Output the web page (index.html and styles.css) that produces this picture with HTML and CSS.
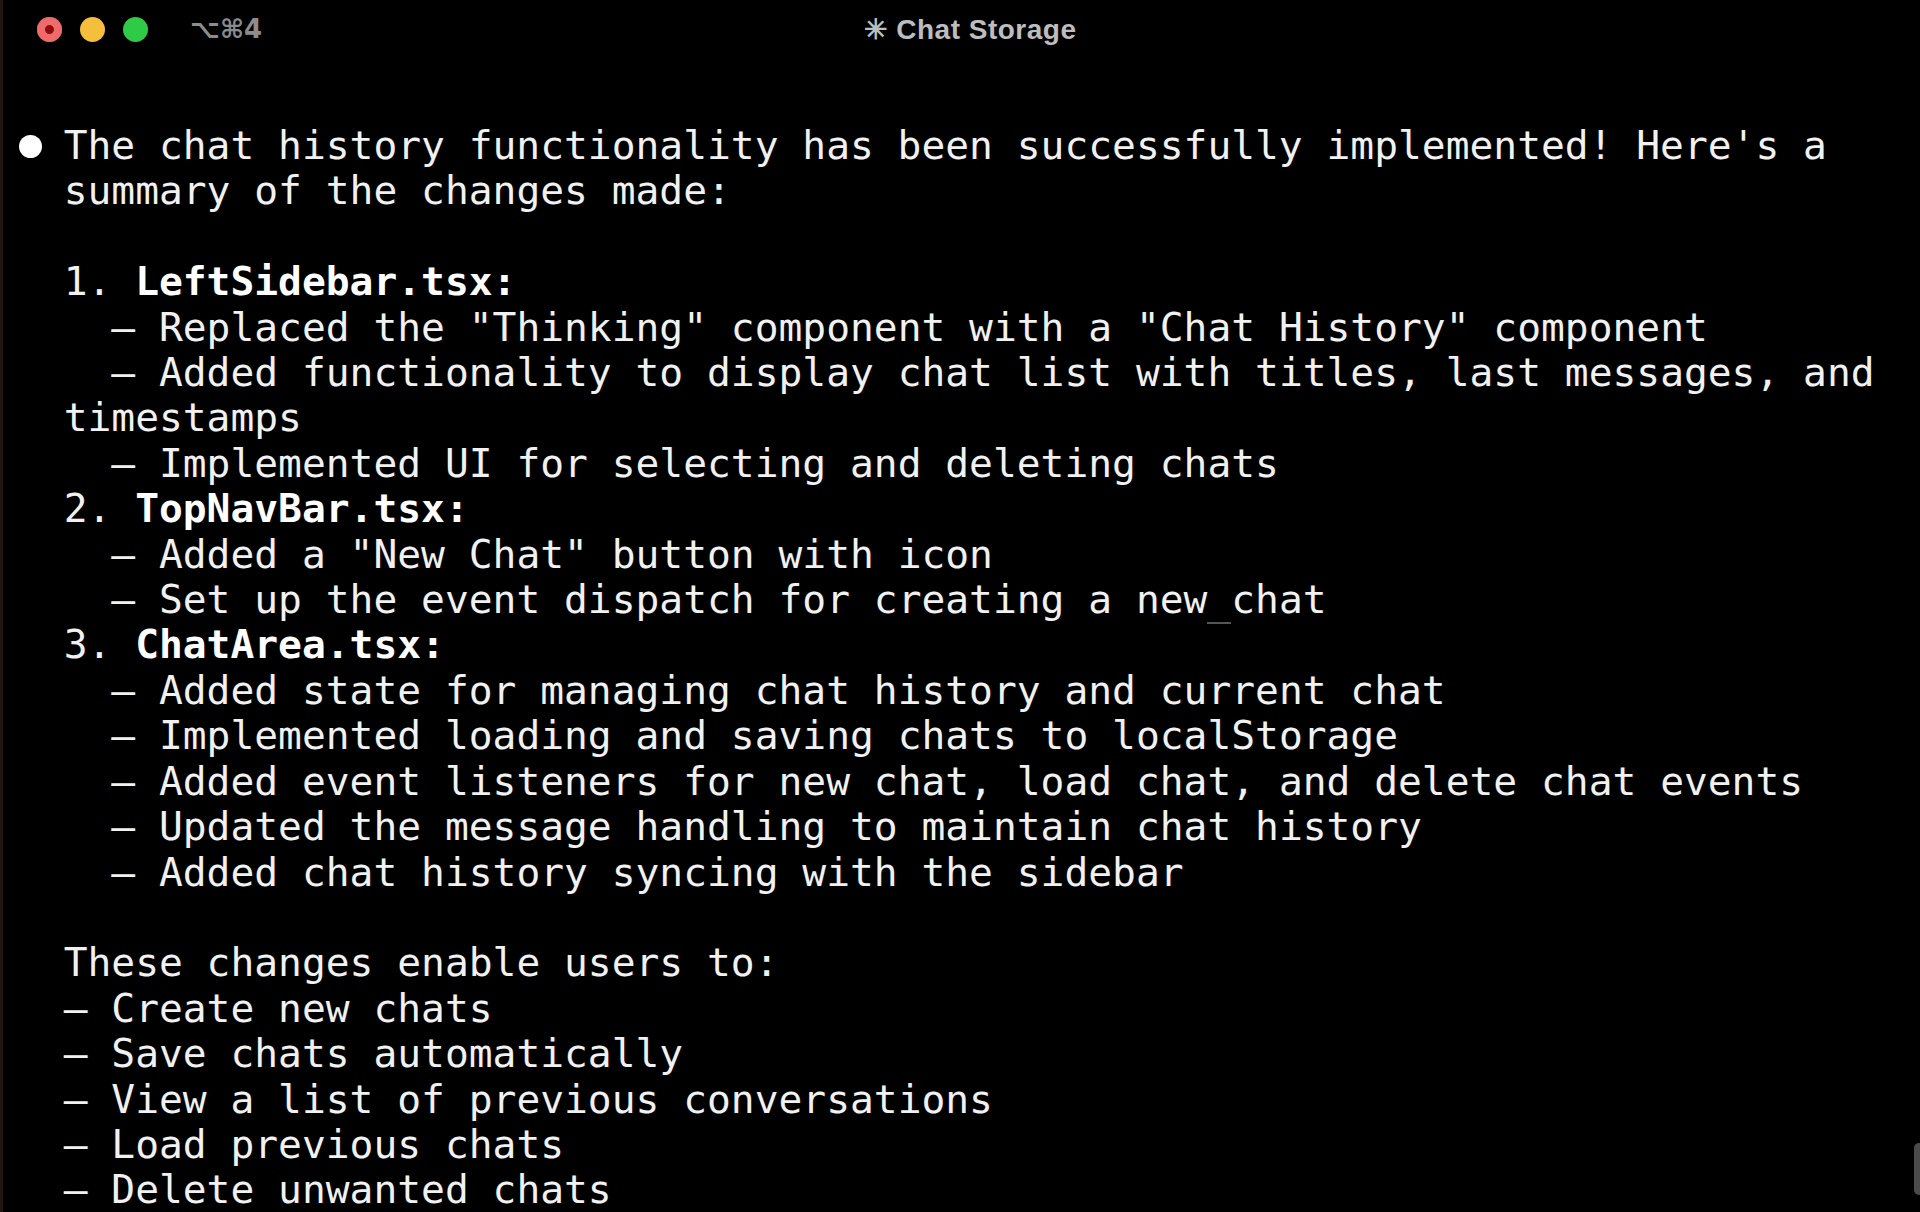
FILE: index.html
```html
<!DOCTYPE html>
<html lang="en">
<head>
  <meta charset="UTF-8">
  <meta name="viewport" content="width=device-width, initial-scale=1.0">
  <title>Chat Storage</title>
  <link rel="stylesheet" href="styles.css">
</head>
<body>

  <div class="window">
    <!-- Title bar -->
    <header class="titlebar">
      <div class="titlebar-left">
        <span class="light light-close"></span>
        <span class="light light-min"></span>
        <span class="light light-max"></span>
        <span class="shortcut">⌥⌘4</span>
      </div>
      <div class="title">✳ Chat Storage</div>
      <div class="titlebar-right"></div>
    </header>

    <!-- Terminal output -->
    <main class="output">
      <div class="line"><span class="marker"><i class="dot"></i></span>The chat history functionality has been successfully implemented! Here's a</div>
      <div class="line">  summary of the changes made:</div>
      <div class="line"> </div>
      <div class="line">  1. <b>LeftSidebar.tsx:</b></div>
      <div class="line">    – Replaced the "Thinking" component with a "Chat History" component</div>
      <div class="line">    – Added functionality to display chat list with titles, last messages, and</div>
      <div class="line">  timestamps</div>
      <div class="line">    – Implemented UI for selecting and deleting chats</div>
      <div class="line">  2. <b>TopNavBar.tsx:</b></div>
      <div class="line">    – Added a "New Chat" button with icon</div>
      <div class="line">    – Set up the event dispatch for creating a new<span class="blip"> </span>chat</div>
      <div class="line">  3. <b>ChatArea.tsx:</b></div>
      <div class="line">    – Added state for managing chat history and current chat</div>
      <div class="line">    – Implemented loading and saving chats to localStorage</div>
      <div class="line">    – Added event listeners for new chat, load chat, and delete chat events</div>
      <div class="line">    – Updated the message handling to maintain chat history</div>
      <div class="line">    – Added chat history syncing with the sidebar</div>
      <div class="line"> </div>
      <div class="line">  These changes enable users to:</div>
      <div class="line">  – Create new chats</div>
      <div class="line">  – Save chats automatically</div>
      <div class="line">  – View a list of previous conversations</div>
      <div class="line">  – Load previous chats</div>
      <div class="line">  – Delete unwanted chats</div>
    </main>

    <div class="scroll-thumb"></div>
  </div>

</body>
</html>
```

FILE: styles.css
```css
html, body {
  margin: 0;
  height: 100%;
  background-color: #000;
}
body {
  overflow: hidden;
}
.window {
  position: relative;
  height: 1212px;
  box-sizing: border-box;
  border-left: 3px solid #24140f;
  overflow: hidden;
  background-color: #000;
}

/* Title bar */
.titlebar {
  display: grid;
  grid-template-columns: 1fr auto 1fr;
  align-items: center;
  height: 58px;
}
.titlebar-left {
  display: flex;
  align-items: center;
  gap: 18px;
  padding-left: 34px;
}
.light {
  width: 25px;
  height: 25px;
  border-radius: 50%;
  flex: none;
}
.light-close {
  background-color: #ef6b6b;
  box-shadow: inset 0 0 0 8px #ef6b6b, inset 0 0 0 13px #8e0c0c;
}
.light-min {
  background-color: #f6bf3b;
}
.light-max {
  background-color: #2fcb47;
}
.shortcut {
  margin-left: 24px;
  font-family: "DejaVu Sans", "Liberation Sans", sans-serif;
  font-weight: bold;
  font-size: 26px;
  color: #8c8c8c;
}
.title {
  padding-left: 18px;
  font-family: "Liberation Sans", Arial, sans-serif;
  font-weight: bold;
  font-size: 28px;
  color: #bdbdbd;
  letter-spacing: 0.5px;
}

/* Terminal text */
.output {
  padding: 65px 0 0 13px;
  font-family: "DejaVu Sans Mono", "Liberation Mono", monospace;
  font-size: 39.6px;
  line-height: 45.4px;
  color: #f1f1f1;
}
.line {
  white-space: pre;
  min-height: 45.4px;
}
.line b {
  font-weight: bold;
  color: #fff;
}
.marker {
  display: inline-block;
  width: 2ch;
  vertical-align: top;
  height: 45.4px;
  position: relative;
}
.dot {
  position: absolute;
  left: 3px;
  top: 12px;
  width: 23px;
  height: 23px;
  border-radius: 50%;
  background-color: #fff;
}
.blip {
  border-bottom: 2px solid #555;
}

.scroll-thumb {
  position: absolute;
  right: 0;
  top: 1143px;
  width: 6px;
  height: 52px;
  border-radius: 5px 0 0 5px;
  background-color: #4b4b4b;
}
```
